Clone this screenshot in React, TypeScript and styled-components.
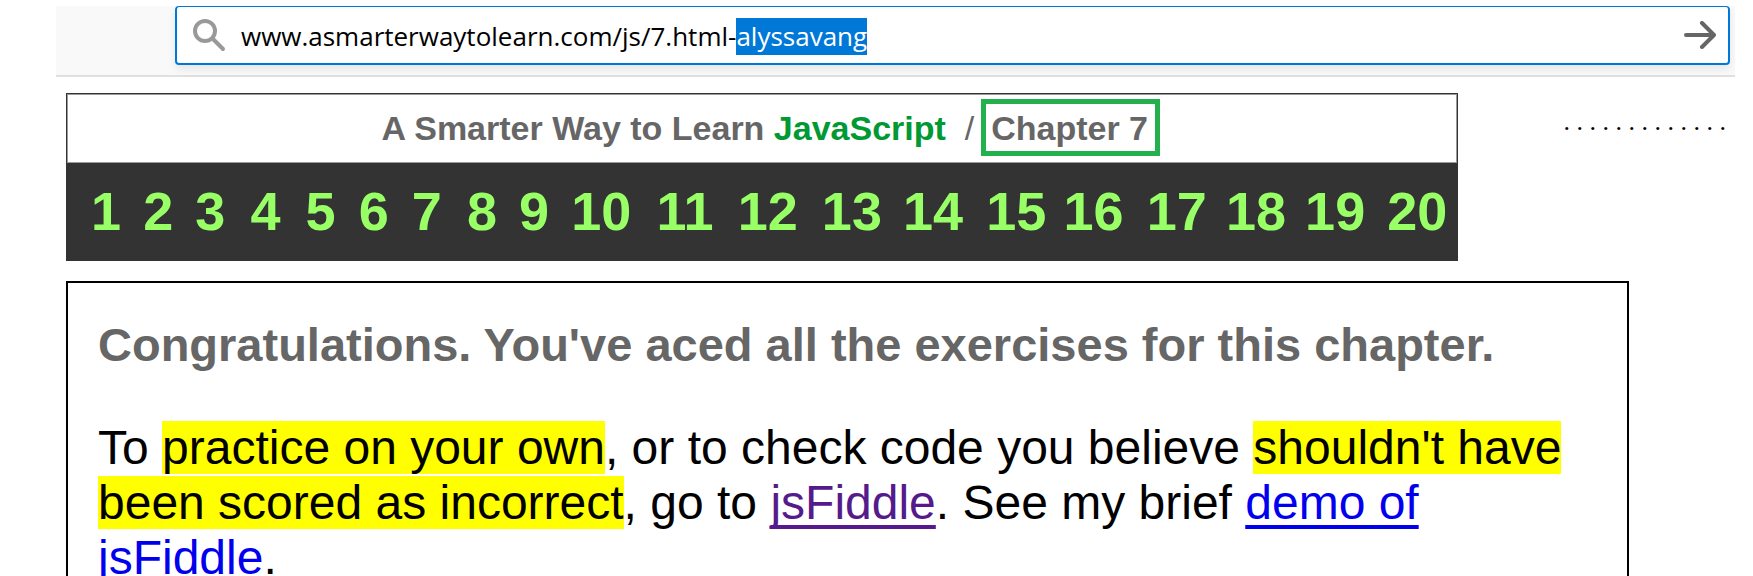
import React, { useEffect, useRef } from "react";
import styled, { createGlobalStyle } from "styled-components";

const GlobalStyle = createGlobalStyle`
  *, *::before, *::after { box-sizing: border-box; }
  body { margin: 0; background: #fff; color: #000; font-family: "Liberation Sans", Arial, sans-serif; }
`;

const Page = styled.div`
  height: 100vh;
  overflow: hidden;
  padding-top: 6px;
`;

const Toolbar = styled.header`
  margin: 0 18px 0 56px;
  padding: 0 5px 10px 119px;
  background: #f9f9f9;
  border-bottom: 2px solid #e0e0e0;
`;

const AddressBar = styled.form`
  display: flex;
  align-items: center;
  height: 59px;
  padding: 0 12px 0 16px;
  background: #fff;
  border: 2px solid #0078d7;
  border-top-width: 1px;
  border-radius: 4px;
  box-shadow: 0 4px 8px rgba(0, 0, 0, 0.08);
`;

const AddressInput = styled.input`
  flex: 1;
  min-width: 0;
  margin-left: 14px;
  padding: 2px 0 0;
  border: 0;
  outline: 0;
  background: transparent;
  color: #000;
  font: 26px/37px "Open Sans", "Segoe UI", sans-serif;
  &::selection { background: #0078d7; color: #fff; }
`;

const GoButton = styled.button`
  display: flex;
  padding: 0;
  border: 0;
  background: none;
`;

const BannerRow = styled.div`
  display: flex;
  gap: 106px;
  margin: 16px 27px 0 66px;
`;

const Banner = styled.div`
  flex: 1;
  background: #333;
  border: 1px solid #333;
`;

const BannerTitle = styled.h1`
  display: flex;
  align-items: baseline;
  justify-content: center;
  height: 69px;
  margin: 0;
  padding: 4px 0 0 18px;
  border: 1px solid #999;
  background: #fff;
  color: #666;
  font-size: 34px;
  line-height: 40px;
  white-space: pre;
`;

const Language = styled.span`
  color: #009933;
`;

const Slash = styled.span`
  font-weight: 400;
`;

const ChapterMark = styled.span`
  margin-left: 7px;
  padding: 4px 7px 3px 5px;
  border: 5px solid #22b14c;
`;

const ChapterNav = styled.nav<{ $columns: string }>`
  display: grid;
  grid-template-columns: ${(p) => p.$columns};
  height: 97px;
  padding: 18px 0 0 24px;
`;

const ChapterLink = styled.a`
  color: #99ff66;
  font-size: 54px;
  font-weight: 700;
  line-height: 60px;
  text-decoration: none;
`;

const Dots = styled.div`
  padding-top: 14px;
  font: 26px/30px "Liberation Serif", serif;
  white-space: nowrap;
`;

const Result = styled.main`
  margin: 20px 124px 0 66px;
  padding: 34px 30px;
  border: 2px solid #000;
  font-size: 48px;
  line-height: 55px;
`;

const Heading = styled.h2`
  margin: 0 0 48px;
  color: #666;
  font-size: 47px;
`;

const Paragraph = styled.p`
  margin: 0;
`;

const Highlight = styled.mark`
  background: #ff0;
  color: inherit;
`;

const TextLink = styled.a<{ $visited?: boolean }>`
  color: ${(p) => (p.$visited ? "#551a8b" : "#0000ee")};
  text-decoration-thickness: 4px;
  text-decoration-skip-ink: none;
  text-underline-offset: 6px;
`;

const ADDRESS = "www.asmarterwaytolearn.com/js/7.html-";
const COMPLETION = "alyssavang";

// Relative width of each chapter's slot in the banner
const SLOTS = [52, 52, 55, 55, 53, 53, 55, 52, 52, 85, 81, 84, 81, 83, 77, 83, 79, 79, 82, 69];

export default function App() {
  const input = useRef<HTMLInputElement>(null);

  useEffect(() => {
    input.current?.focus();
    input.current?.setSelectionRange(ADDRESS.length, ADDRESS.length + COMPLETION.length);
  }, []);

  return (
    <Page>
      <GlobalStyle />
      <Toolbar>
        <AddressBar onSubmit={(e) => e.preventDefault()}>
          <svg width="34" height="38" viewBox="0 0 34 38" fill="none" stroke="#999" strokeWidth="4" strokeLinecap="round" aria-hidden="true">
            <circle cx="12" cy="15" r="10" />
            <path d="M19.5 22.5 L30 33" />
          </svg>
          <AddressInput ref={input} aria-label="Address" spellCheck={false} defaultValue={ADDRESS + COMPLETION} />
          <GoButton type="submit" aria-label="Go">
            <svg width="32" height="28" viewBox="0 0 32 28" fill="none" stroke="#666" strokeWidth="4" strokeLinecap="round" strokeLinejoin="round" aria-hidden="true">
              <path d="M2 14 H30 M18 2 L30 14 L18 26" />
            </svg>
          </GoButton>
        </AddressBar>
      </Toolbar>

      <BannerRow>
        <Banner>
          <BannerTitle>
            <span>A Smarter Way to Learn </span>
            <Language>JavaScript</Language>
            <Slash>{"  /"}</Slash>
            <ChapterMark>Chapter 7</ChapterMark>
          </BannerTitle>
          <ChapterNav $columns={SLOTS.map((w) => `${w}fr`).join(" ")} aria-label="Chapters">
            {SLOTS.map((_, i) => (
              <ChapterLink key={i} href={`#${i + 1}`}>
                {i + 1}
              </ChapterLink>
            ))}
          </ChapterNav>
        </Banner>
        <Dots>. . . . . . . . . . . . .</Dots>
      </BannerRow>

      <Result>
        <Heading>Congratulations. You've aced all the exercises for this chapter.</Heading>
        <Paragraph>
          To <Highlight>practice on your own</Highlight>, or to check code you believe{" "}
          <Highlight>shouldn't have been scored as incorrect</Highlight>, go to{" "}
          <TextLink href="#jsfiddle" $visited>jsFiddle</TextLink>. See my brief{" "}
          <TextLink href="#demo">demo of jsFiddle</TextLink>.
        </Paragraph>
      </Result>
    </Page>
  );
}
